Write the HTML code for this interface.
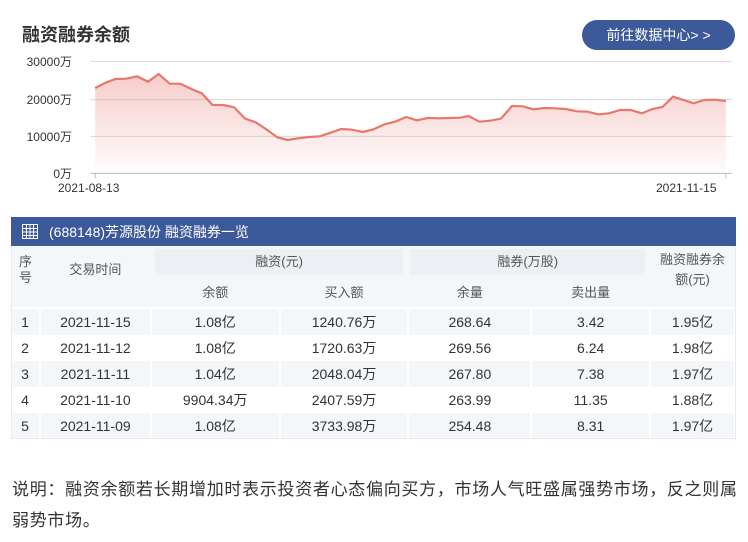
<!DOCTYPE html>
<html><head><meta charset="utf-8"><style>
*{margin:0;padding:0;box-sizing:border-box}
body{width:748px;height:542px;background:#fff;font-family:"Liberation Sans","Noto Sans CJK SC",sans-serif;color:#333;position:relative;overflow:hidden}
.abs{position:absolute}
.title{left:22px;top:21px;font-size:18px;font-weight:bold;color:#333}
.btn{left:582px;top:20px;width:153px;height:30px;border-radius:15px;background:#3c5a99;color:#fff;font-size:14px;line-height:30px;text-align:center}
.yl{font-size:12px;color:#333;width:70px;text-align:right;left:2px}
.xl{font-size:12px;color:#333}
table{position:absolute;left:11px;top:246px;width:725px;border-collapse:collapse;font-size:14px;color:#333;text-align:center}
td{height:26px;border-right:2px solid #fff;padding:0}
.bar{left:11px;top:217px;width:725px;height:30px;background:#3c5a99;color:#fff;font-size:14px;line-height:30px;padding-left:38px}
.hd td{background:#f4f7f9;color:#555;font-size:13px;border-right:none}
.g{background:#eceff3!important}
tr.r td{height:26px}
tr.o td{background:#f4f7f9}
.note{left:12px;top:474px;width:736px;font-size:17px;line-height:31px;letter-spacing:0.7px;color:#333;white-space:nowrap}
</style></head><body>
<div class="abs title">融资融券余额</div>
<div class="abs btn">前往数据中心&gt; &gt;</div>
<div class="abs yl" style="top:53px">30000万</div>
<div class="abs yl" style="top:91px">20000万</div>
<div class="abs yl" style="top:128px">10000万</div>
<div class="abs yl" style="top:165px">0万</div>
<div class="abs xl" style="left:58px;top:181px">2021-08-13</div>
<div class="abs xl" style="left:656px;top:181px">2021-11-15</div>
<svg class="abs" style="left:0;top:0" width="748" height="210" viewBox="0 0 1556 630" preserveAspectRatio="none">
<defs><linearGradient id="gr" x1="0" y1="0" x2="0" y2="1"><stop offset="0" stop-color="#e8817a" stop-opacity="0.4"/><stop offset="1" stop-color="#e8817a" stop-opacity="0.02"/></linearGradient></defs>
<g stroke="#d8d8d8" stroke-width="1">
<line x1="188" y1="184" x2="1522" y2="184" vector-effect="non-scaling-stroke"/>
<line x1="188" y1="299" x2="1522" y2="299" vector-effect="non-scaling-stroke"/>
<line x1="188" y1="409" x2="1522" y2="409" vector-effect="non-scaling-stroke"/>
<line x1="188" y1="520" x2="1522" y2="520" stroke="#bbb" vector-effect="non-scaling-stroke"/>
<line x1="198" y1="520" x2="198" y2="535" stroke="#bbb" vector-effect="non-scaling-stroke"/>
<line x1="1510" y1="520" x2="1510" y2="535" stroke="#bbb" vector-effect="non-scaling-stroke"/>
</g>
<path fill="url(#gr)" d="M198,264 L220,248 240,237 262,236 285,229 308,245 330,222 353,251 375,251 398,267 420,280 442,315 465,315 487,322 510,356 532,367 555,389 577,412 598,420 620,415 643,411 665,409 688,398 710,387 732,389 755,396 777,388 800,373 822,365 845,351 867,361 890,354 912,355 935,354 957,353 975,348 997,365 1020,362 1042,356 1065,318 1087,319 1110,328 1132,324 1155,325 1177,327 1200,334 1222,335 1245,343 1267,340 1290,330 1312,330 1335,340 1357,327 1378,321 1400,290 1422,300 1443,310 1465,300 1488,299 1510,303 L1510,520 L198,520Z"/>
<polyline fill="none" stroke="#e8776c" stroke-width="2.2" vector-effect="non-scaling-stroke" points="198,264 220,248 240,237 262,236 285,229 308,245 330,222 353,251 375,251 398,267 420,280 442,315 465,315 487,322 510,356 532,367 555,389 577,412 598,420 620,415 643,411 665,409 688,398 710,387 732,389 755,396 777,388 800,373 822,365 845,351 867,361 890,354 912,355 935,354 957,353 975,348 997,365 1020,362 1042,356 1065,318 1087,319 1110,328 1132,324 1155,325 1177,327 1200,334 1222,335 1245,343 1267,340 1290,330 1312,330 1335,340 1357,327 1378,321 1400,290 1422,300 1443,310 1465,300 1488,299 1510,303"/>
</svg>
<div class="abs bar">(688148)芳源股份 融资融券一览</div>
<svg class="abs" style="left:22px;top:224px" width="16" height="15" viewBox="0 0 16 15"><rect x="0.5" y="0.5" width="15" height="14" fill="none" stroke="#fff"/><g stroke="#fff" stroke-width="1"><line x1="0" y1="4.5" x2="16" y2="4.5"/><line x1="0" y1="8" x2="16" y2="8"/><line x1="0" y1="11.5" x2="16" y2="11.5"/><line x1="4.5" y1="0" x2="4.5" y2="15"/><line x1="8" y1="0" x2="8" y2="15"/><line x1="11.5" y1="0" x2="11.5" y2="15"/></g></svg>
<table>
<colgroup><col style="width:29px"><col style="width:111px"><col style="width:129px"><col style="width:129px"><col style="width:123px"><col style="width:119px"><col style="width:85px"></colgroup>
<tr class="hd"><td rowspan="2" style="vertical-align:top;line-height:16px;padding-top:8px">序<br>号</td><td rowspan="2" style="vertical-align:top;padding-top:13px">交易时间</td><td colspan="2" style="height:28px;padding:3px 5px 0 4px"><div class="g" style="height:26px;line-height:26px">融资(元)</div></td><td colspan="2" style="padding:3px 5px 0 2px"><div class="g" style="height:26px;line-height:26px">融券(万股)</div></td><td rowspan="2" style="vertical-align:top;line-height:20px;padding-top:4px">融资融券余<br>额(元)</td></tr>
<tr class="hd"><td style="height:32px">余额</td><td>买入额</td><td>余量</td><td>卖出量</td></tr>
<tr><td colspan="7" style="height:2px;background:#fff;border:none"></td></tr>
<tr class="r o"><td>1</td><td>2021-11-15</td><td>1.08亿</td><td>1240.76万</td><td>268.64</td><td>3.42</td><td>1.95亿</td></tr>
<tr class="r"><td>2</td><td>2021-11-12</td><td>1.08亿</td><td>1720.63万</td><td>269.56</td><td>6.24</td><td>1.98亿</td></tr>
<tr class="r o"><td>3</td><td>2021-11-11</td><td>1.04亿</td><td>2048.04万</td><td>267.80</td><td>7.38</td><td>1.97亿</td></tr>
<tr class="r"><td>4</td><td>2021-11-10</td><td>9904.34万</td><td>2407.59万</td><td>263.99</td><td>11.35</td><td>1.88亿</td></tr>
<tr class="r o"><td>5</td><td>2021-11-09</td><td>1.08亿</td><td>3733.98万</td><td>254.48</td><td>8.31</td><td>1.97亿</td></tr>
</table>
<div class="abs" style="left:11px;top:246px;width:725px;height:193px;border:1px solid #e6eaee;border-top:none"></div>
<div class="abs note">说明：融资余额若长期增加时表示投资者心态偏向买方，市场人气旺盛属强势市场，反之则属<br>弱势市场。</div>
</body></html>
